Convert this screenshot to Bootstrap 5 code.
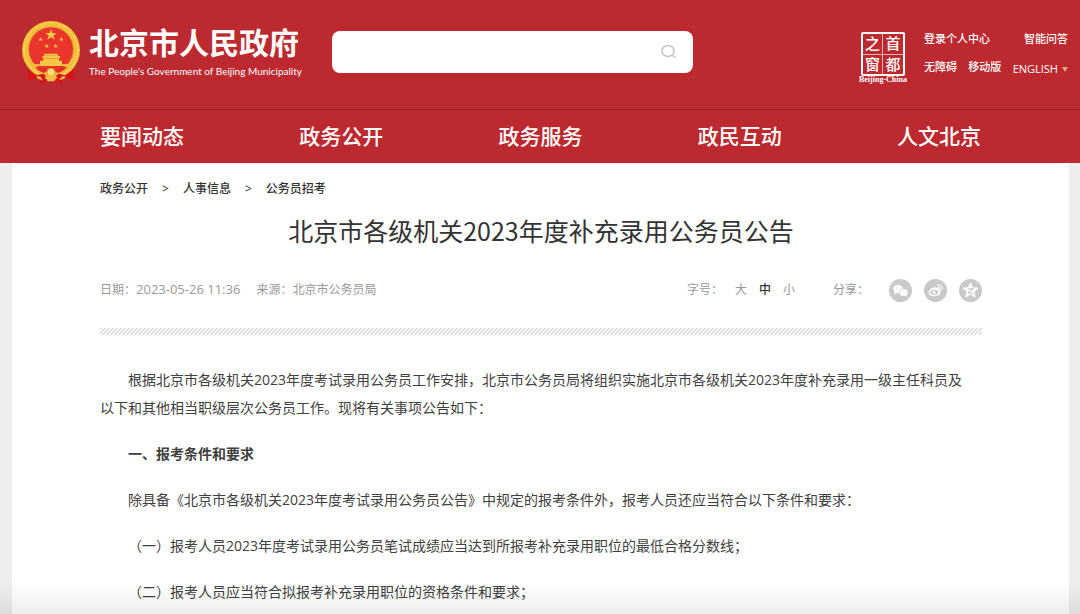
<!DOCTYPE html>
<html lang="zh-CN">
<head>
<meta charset="utf-8">
<meta name="viewport" content="width=device-width, initial-scale=1">
<title>北京市各级机关2023年度补充录用公务员公告</title>
<link href="https://cdn.jsdelivr.net/npm/bootstrap@5.3.0/dist/css/bootstrap.min.css" rel="stylesheet">
<style>
  body { font-family: "Open Sans", "Noto Sans CJK SC", sans-serif; background: #eeeeec; color: #333; font-size: 12px; }
  a { color: inherit; text-decoration: none; }
  .site-head { background: #bc2a2f; color: #fff; }
  .brand-bar { height: 109px; padding: 20px 12px 0 21px; }
  .brand-name { font-size: 30px; line-height: 40px; font-weight: 700; margin-top: 3px; }
  .brand-sub { font-family: Lato, sans-serif; font-size: 10px; line-height: 16px; }
  .search-box { width: 34.5%; height: 42px; margin-top: 11px; margin-left: 30px; background: #fff; border-radius: 8px; }
  .search-box .form-control { box-shadow: none; background: transparent; }
  .seal { margin-top: 12px; width: 50px; }
  .seal-grid { width: 44px; height: 44px; display: grid; grid-template-columns: 1fr 1fr; border: 2px solid #fff; border-radius: 2px; font-size: 15px; line-height: 19px; font-weight: 500; text-align: center; }
  .seal-grid span:nth-child(odd) { border-right: 1px solid #e9b4b6; }
  .seal-grid span:nth-child(-n+2) { border-bottom: 1px solid #e9b4b6; }
  .seal-cap { font: 700 8px/8px "Liberation Serif", serif; white-space: nowrap; }
  .quick-links { width: 144px; margin-left: 16px; font-size: 11px; line-height: 16px; font-weight: 500; padding-top: 11px; }
  .english-link { line-height: 20px; }
  .caret-mark { color: #e0b070; font-size: 6px; }
  .main-nav { border-top: 1px solid #982024; padding: 0 99px 0 100px; font-size: 21px; line-height: 53px; font-weight: 500; }
  .sheet { margin: 0 11px 0 12px; padding: 16px 87px 6px 88px; background: #fff; min-height: calc(100vh - 163px); }
  .crumbs { line-height: 20px; font-weight: 500; --bs-breadcrumb-item-padding-x: 14px; --bs-breadcrumb-divider: ">"; --bs-breadcrumb-divider-color: #333; --bs-breadcrumb-font-size: 12px; }
  .headline { font-family: "Noto Sans CJK SC", sans-serif; font-size: 25px; line-height: 36px; margin-top: 13px; }
  .meta-row { color: #999; margin-top: 30px; height: 24px; }
  .font-sizer { margin-right: 38px; }
  .stamp { font-size: 13px; }
  .size-btn { border: 0; background: none; padding: 0; color: inherit; }
  .size-btn.active { color: #333; font-weight: 500; }
  .hatch { height: 7px; margin-top: 26px; background: linear-gradient(135deg, #ddd 25%, #fff 25% 50%, #ddd 50% 75%, #fff 75%) 0 0 / 4px 4px; }
  .article { margin-top: 31px; font-size: 14px; line-height: 28px; color: #404040; }
  .article p { margin: 0 0 18px; text-indent: 2em; }
  .article p:last-child { margin-bottom: 0; }
  .fade-edge { height: 32px; background: linear-gradient(rgba(0,0,0,0), rgba(0,0,0,.07)); pointer-events: none; }
</style>
</head>
<body>
<header class="site-head">
  <div class="brand-bar d-flex align-items-start">
    <a href="#" class="d-flex flex-shrink-0" aria-label="北京市人民政府">
      <svg width="60" height="64" viewBox="20 22 180 192" aria-hidden="true">
        <path d="M42 165l-2 38 32-8 6 17 32-10 32 10 6-17 32 8-4-38z" fill="#d8131b"/>
        <circle cx="110" cy="112" r="87" fill="#f3bd3c"/>
        <circle cx="110" cy="112" r="80" fill="none" stroke="#ffda62" stroke-width="5" stroke-dasharray="5 4"/>
        <circle cx="110" cy="110" r="67" fill="#e9352c" stroke="#d99a25" stroke-width="2"/>
        <g fill="#f5c744">
          <path d="M110 49l4 12h13l-10 8 4 12-11-7-11 7 4-12-10-8h13z"/>
          <path d="M79 73l2 5h5l-4 3 2 5-5-3-5 3 2-5-4-3h5zM141 73l2 5h5l-4 3 2 5-5-3-5 3 2-5-4-3h5zM97 93l2 5h5l-4 3 2 5-5-3-5 3 2-5-4-3h5zM124 93l2 5h5l-4 3 2 5-5-3-5 3 2-5-4-3h5z"/>
          <path d="M91 123h38l3 6H88zM84 130h53v6H84zM87 137h47v7H87zM77 144h66v11H77zM54 155h112l-8 5H62z"/>
        </g>
        <path d="M62 164q24 0 36 10l-8 7q-17-4-28-17zM158 164q-24 0-36 10l8 7q17-4 28-17z" fill="#e62a25"/>
        <circle cx="110" cy="179" r="12" fill="#ffe07a" stroke="#d89a28" stroke-width="3"/>
        <path d="M66 188l21-5 10 8-13 10-7-9zM154 188l-21-5-10 8 13 10 7-9z" fill="#da161d"/>
        <path d="M66 190l12 2 8 11-16-5zM154 190l-12 2-8 11 16-5zM92 192q18-10 36 0l-8 14H100z" fill="#f5bd45"/>
      </svg>
      <span class="d-block ms-2">
        <span class="brand-name d-block text-nowrap">北京市人民政府</span>
        <span class="brand-sub d-block text-nowrap">The People's Government of Beijing Municipality</span>
      </span>
    </a>
    <form class="search-box d-flex align-items-center" role="search">
      <input class="form-control border-0" type="search" aria-label="搜索">
      <button class="btn border-0 p-0 me-3 d-flex" type="button" aria-label="搜索">
        <svg width="16" height="16" viewBox="0 0 16 16" fill="none" stroke="#c4c4c4" stroke-width="1.5"><ellipse cx="7" cy="7" rx="6" ry="5.5"/><path d="M11 11l3.500 3"/></svg>
      </button>
    </form>
    <a href="#" class="seal ms-auto flex-shrink-0 d-flex flex-column align-items-center">
      <span class="seal-grid"><span>之</span><span>首</span><span>窗</span><span>都</span></span>
      <span class="seal-cap">Beijing-China</span>
    </a>
    <div class="quick-links flex-shrink-0">
      <div class="d-flex justify-content-between"><a href="#">登录个人中心</a><a href="#">智能问答</a></div>
      <div class="d-flex justify-content-between mt-2 pt-1"><a href="#">无障碍</a><a href="#">移动版</a><a href="#" class="english-link fw-normal d-flex align-items-center gap-1">ENGLISH<span class="caret-mark">▼</span></a></div>
    </div>
  </div>
  <nav class="main-nav d-flex justify-content-between">
    <a href="#">要闻动态</a><a href="#">政务公开</a><a href="#">政务服务</a><a href="#">政民互动</a><a href="#">人文北京</a>
  </nav>
</header>
<main class="sheet">
  <nav aria-label="breadcrumb">
    <ol class="breadcrumb crumbs mb-0">
      <li class="breadcrumb-item"><a href="#">政务公开</a></li>
      <li class="breadcrumb-item"><a href="#">人事信息</a></li>
      <li class="breadcrumb-item"><a href="#">公务员招考</a></li>
    </ol>
  </nav>
  <h1 class="headline text-center fw-normal mb-0">北京市各级机关2023年度补充录用公务员公告</h1>
  <div class="meta-row d-flex align-items-center">
    <span>日期：<time class="stamp">2023-05-26 11:36</time></span>
    <span class="ms-3">来源：北京市公务员局</span>
    <div class="font-sizer d-flex ms-auto gap-2">
      <span class="pe-1">字号：</span>
      <button type="button" class="size-btn">大</button>
      <button type="button" class="size-btn active mx-1">中</button>
      <button type="button" class="size-btn">小</button>
    </div>
    <span class="me-3 pe-1">分享：</span>
    <div class="d-flex gap-2">
      <a href="#" class="me-1" aria-label="微信"><svg class="d-block" width="23" height="23" viewBox="0 0 24 24"><circle cx="12" cy="12" r="12" fill="#c9c9c9"/><ellipse cx="9.500" cy="10.500" rx="5" ry="4.300" fill="#fff"/><path d="M5.500 13l-.3 3 3-1.500z" fill="#fff"/><ellipse cx="15" cy="14" rx="4.600" ry="3.800" fill="#fff" stroke="#c9c9c9" stroke-width=".6"/><path d="M16 17l2.500 1.500-.2-2.500z" fill="#fff"/><g fill="#c9c9c9"><circle cx="7.800" cy="9.300" r=".7"/><circle cx="11.300" cy="9.300" r=".7"/><circle cx="13.500" cy="13" r=".6"/><circle cx="16.500" cy="13" r=".6"/></g></svg></a>
      <a href="#" class="me-1" aria-label="微博"><svg class="d-block" width="23" height="23" viewBox="0 0 24 24"><circle cx="12" cy="12" r="12" fill="#c9c9c9"/><path d="M10.500 8.500c1.500-.6 2 .3 1.700 1.400 2-.8 4-.6 3.500 1.400 3.500 1.200 1.800 6.200-4.700 6.700-7 .3-8-4.500-3.700-7.700 1-.9 2-1.500 3.200-1.800z" fill="#fff"/><ellipse cx="10.700" cy="14" rx="4.200" ry="2.700" fill="#c9c9c9" transform="rotate(-8 10.700 14)"/><circle cx="10.300" cy="14.200" r="1.900" fill="#fff"/><circle cx="9.800" cy="14.600" r=".7" fill="#c9c9c9"/><path d="M14 6.500c3.500-.8 5.800 1.800 4.700 5M14.300 8.600c1.700-.3 2.800.8 2.300 2.400" fill="none" stroke="#fff" stroke-width="1.100" stroke-linecap="round"/></svg></a>
      <a href="#" aria-label="QQ空间"><svg class="d-block" width="23" height="23" viewBox="0 0 24 24"><circle cx="12" cy="12" r="12" fill="#c9c9c9"/><path d="M12 4l2.300 5 5.500.6-4.100 3.700 1.200 5.500L12 16l-4.900 2.800 1.200-5.500-4.100-3.700 5.500-.6z" fill="#fff" stroke="#fff" stroke-linejoin="round"/><path d="M9.200 10.300h5.300l-5 4.300c2 .4 3.700.3 5.500 0" fill="none" stroke="#c9c9c9" stroke-width="1.100"/></svg></a>
    </div>
  </div>
  <div class="hatch"></div>
  <article class="article">
    <p>根据北京市各级机关2023年度考试录用公务员工作安排，北京市公务员局将组织实施北京市各级机关2023年度补充录用一级主任科员及<br>以下和其他相当职级层次公务员工作。现将有关事项公告如下：</p>
    <p><strong>一、报考条件和要求</strong></p>
    <p>除具备《北京市各级机关2023年度考试录用公务员公告》中规定的报考条件外，报考人员还应当符合以下条件和要求：</p>
    <p>（一）报考人员2023年度考试录用公务员笔试成绩应当达到所报考补充录用职位的最低合格分数线；</p>
    <p>（二）报考人员应当符合拟报考补充录用职位的资格条件和要求；</p>
  </article>
</main>
<div class="fade-edge fixed-bottom"></div>
<script src="https://cdn.jsdelivr.net/npm/bootstrap@5.3.0/dist/js/bootstrap.bundle.min.js"></script>
</body>
</html>
